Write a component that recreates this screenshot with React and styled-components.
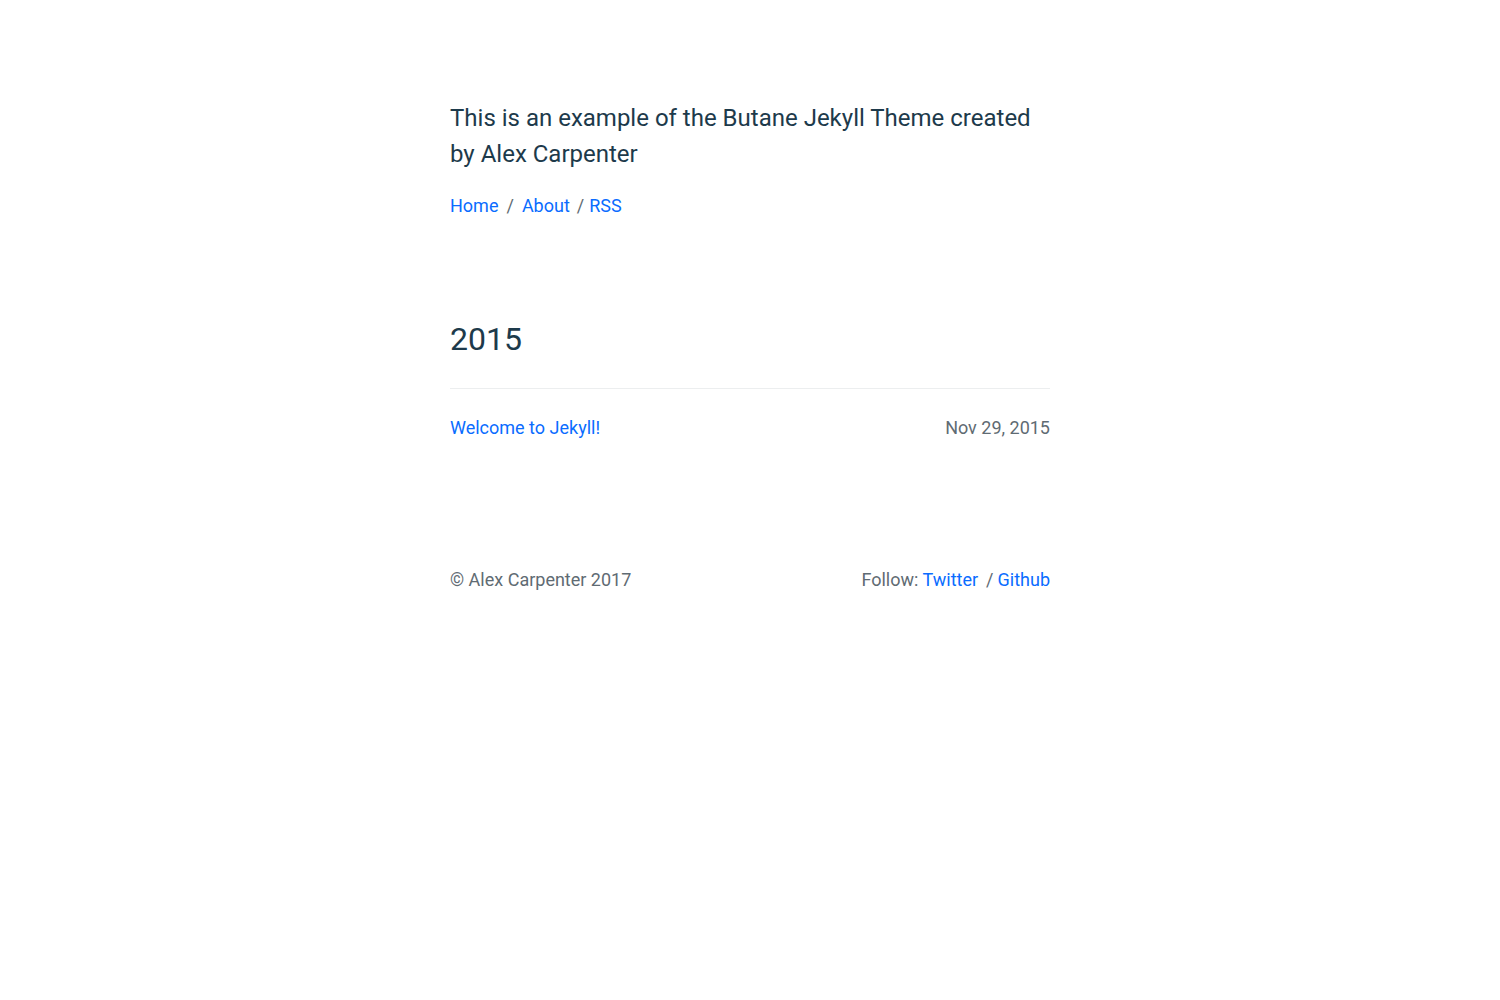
import styled, { createGlobalStyle } from "styled-components";

const GlobalStyle = createGlobalStyle`
  body {
    margin: 0;
    background: #fff;
    font-family: Roboto, "Liberation Sans", sans-serif;
    color: #1d3a4b;
  }
`;

const Wrapper = styled.div`
  width: 600px;
  margin: 0 auto;
  padding-top: 100px;
`;

const Header = styled.header`
  margin-bottom: 101px;
`;

const Tagline = styled.p`
  margin: 0 0 20px;
  font-size: 24px;
  line-height: 36px;
  color: #1d3a4b;
`;

const Nav = styled.nav`
  display: flex;
  align-items: center;
  font-size: 18px;
  line-height: 27px;
`;

const Link = styled.a`
  color: #0a6cff;
  text-decoration: none;
`;

const Sep = styled.span`
  color: #5f6b73;
  margin-left: ${(p) => p.$l}px;
  margin-right: ${(p) => p.$r}px;
`;

const Year = styled.h2`
  margin: 0;
  font-size: 32px;
  font-weight: 400;
  line-height: 38px;
  padding-bottom: 30px;
  border-bottom: 1px solid #eceeef;
`;

const PostRow = styled.div`
  display: flex;
  justify-content: space-between;
  align-items: center;
  padding-top: 25px;
  font-size: 18px;
  line-height: 27px;
`;

const Muted = styled.span`
  color: #5f6b73;
`;

const Footer = styled.footer`
  display: flex;
  justify-content: space-between;
  align-items: center;
  margin-top: 125px;
  font-size: 18px;
  line-height: 27px;
  color: #5f6b73;
`;

export default function App() {
  return (
    <>
      <GlobalStyle />
      <Wrapper>
        <Header>
          <Tagline>
            This is an example of the Butane Jekyll Theme created by Alex Carpenter
          </Tagline>
          <Nav>
            <Link href="#">Home</Link>
            <Sep $l={8} $r={8}>/</Sep>
            <Link href="#">About</Link>
            <Sep $l={7} $r={5}>/</Sep>
            <Link href="#">RSS</Link>
          </Nav>
        </Header>
        <section>
          <Year>2015</Year>
          <PostRow>
            <Link href="#">Welcome to Jekyll!</Link>
            <Muted>Nov 29, 2015</Muted>
          </PostRow>
        </section>
        <Footer>
          <span>© Alex Carpenter 2017</span>
          <span>
            Follow: <Link href="#">Twitter</Link>
            <Sep $l={8} $r={4}>/</Sep>
            <Link href="#">Github</Link>
          </span>
        </Footer>
      </Wrapper>
    </>
  );
}
